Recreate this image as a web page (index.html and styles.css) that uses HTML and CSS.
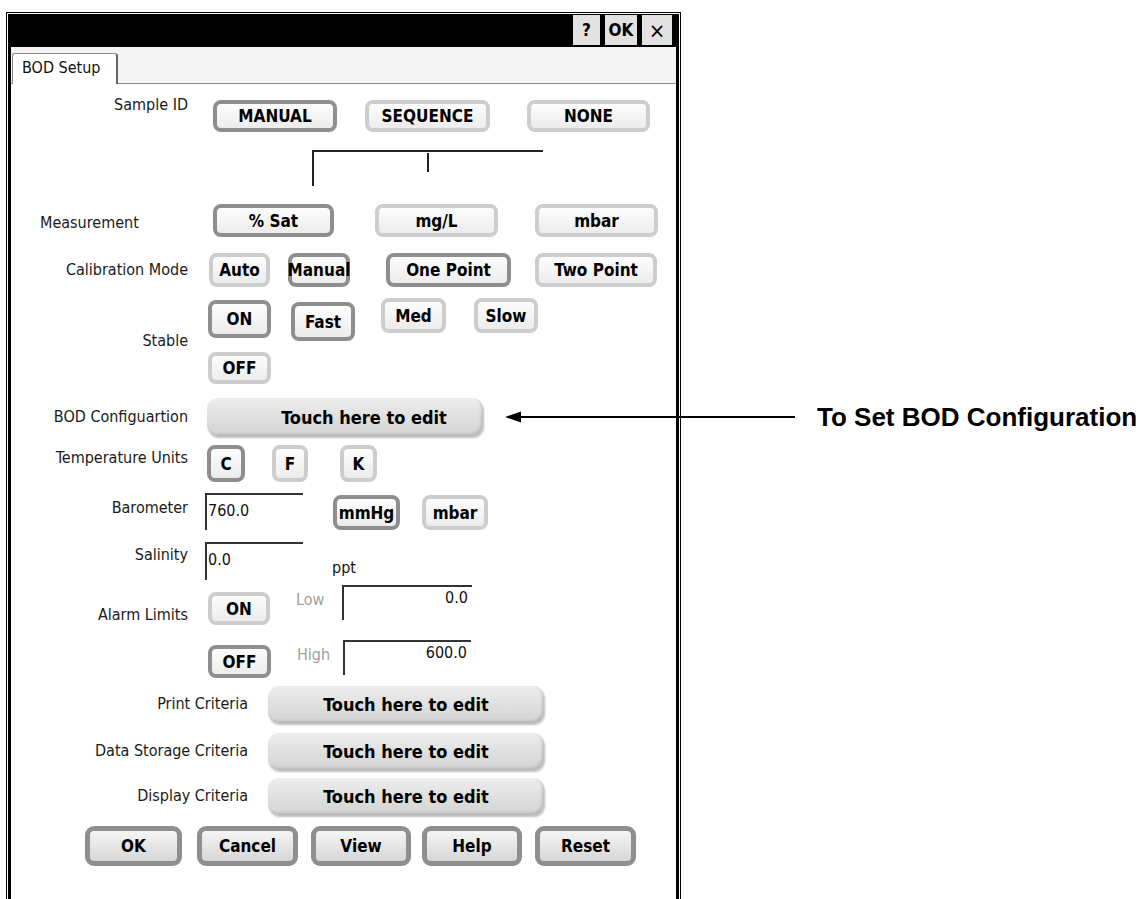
FILE: index.html
```html
<!DOCTYPE html>
<html lang="en">
<head>
    <meta charset="UTF-8">
    <title>BOD Setup</title>
    <link rel="stylesheet" href="styles.css">
</head>
<body>

    <div class="window">
        <div class="titlebar">
            <span class="tb-btn tb-help">?</span>
            <span class="tb-btn tb-ok">OK</span>
            <span class="tb-btn tb-close">&times;</span>
        </div>

        <div class="tabstrip">
            <div class="tab">BOD Setup</div>
        </div>

        <div class="panel">
            <div class="row r-sample">
                <div class="lbl">Sample ID</div>
                <div class="btn on b-manual">MANUAL</div>
                <div class="btn b-seq">SEQUENCE</div>
                <div class="btn b-none">NONE</div>
            </div>

            <div class="connector"><div class="stub"></div></div>

            <div class="row r-measure">
                <div class="lbl">Measurement</div>
                <div class="btn on b-sat">% Sat</div>
                <div class="btn b-mgl">mg/L</div>
                <div class="btn b-mbar">mbar</div>
            </div>

            <div class="row r-cal">
                <div class="lbl">Calibration Mode</div>
                <div class="btn b-auto">Auto</div>
                <div class="btn on b-manual2">Manual</div>
                <div class="btn on b-one">One Point</div>
                <div class="btn b-two">Two Point</div>
            </div>

            <div class="row r-speed">
                <div class="lbl"></div>
                <div class="btn on b-on">ON</div>
                <div class="btn on b-fast">Fast</div>
                <div class="btn b-med">Med</div>
                <div class="btn b-slow">Slow</div>
            </div>

            <div class="row r-stable">
                <div class="lbl">Stable</div>
                <div class="btn b-off">OFF</div>
            </div>

            <div class="row r-bod">
                <div class="lbl">BOD Configuartion</div>
                <div class="touch touch-bod">Touch here to edit</div>
                <div class="callout">
                    <svg width="290" height="14" viewBox="0 0 290 14">
                        <line x1="12" y1="7" x2="290" y2="7" stroke="#000" stroke-width="2"/>
                        <polygon points="0,7 16,1.5 16,12.5" fill="#000"/>
                    </svg>
                    <span class="callout-text">To Set BOD Configuration</span>
                </div>
            </div>

            <div class="row r-temp">
                <div class="lbl">Temperature Units</div>
                <div class="btn on b-c">C</div>
                <div class="btn b-f">F</div>
                <div class="btn b-k">K</div>
            </div>

            <div class="row r-baro">
                <div class="lbl">Barometer</div>
                <div class="field">760.0</div>
                <div class="btn on b-mmhg">mmHg</div>
                <div class="btn b-mbar2">mbar</div>
            </div>

            <div class="row r-sal">
                <div class="lbl">Salinity</div>
                <div class="field">0.0</div>
                <div class="unit">ppt</div>
            </div>

            <div class="row r-alarm1">
                <div class="lbl">Alarm Limits</div>
                <div class="btn b-alon">ON</div>
                <div class="lim-lbl">Low</div>
                <div class="field num">0.0</div>
            </div>

            <div class="row r-alarm2">
                <div class="lbl"></div>
                <div class="btn on b-aloff">OFF</div>
                <div class="lim-lbl">High</div>
                <div class="field num">600.0</div>
            </div>

            <div class="row r-crit">
                <div class="lbl">Print Criteria</div>
                <div class="touch">Touch here to edit</div>
            </div>

            <div class="row r-crit r-data">
                <div class="lbl">Data Storage Criteria</div>
                <div class="touch">Touch here to edit</div>
            </div>

            <div class="row r-crit r-disp">
                <div class="lbl">Display Criteria</div>
                <div class="touch">Touch here to edit</div>
            </div>

            <div class="row r-actions">
                <div class="big b-ok">OK</div>
                <div class="big b-cancel">Cancel</div>
                <div class="big b-view">View</div>
                <div class="big b-help">Help</div>
                <div class="big b-reset">Reset</div>
            </div>
        </div>
    </div>

</body>
</html>
```

FILE: styles.css
```css
* {
    box-sizing: border-box;
}
html, body {
    overflow: hidden;
}
body {
    margin: 0;
    padding: 12px 0 0 6px;
    background-color: #fff;
    font-family: "DejaVu Sans Condensed", "DejaVu Sans", sans-serif;
    font-size: 16px;
    color: #111;
}

/* window frame */
.window {
    margin: 2px 0 0 2px;
    width: 671px;
    height: 900px;
    border: 3px solid #000;
    outline: 1px solid #000;
    outline-offset: 1px;
    background-color: #fff;
}
.titlebar {
    height: 30px;
    background-color: #000;
    display: flex;
    justify-content: flex-end;
    gap: 5px;
    padding-right: 4px;
}
.tb-btn {
    height: 30px;
    margin-top: -2px;
    background-color: #e2e2e2;
    color: #000;
    font-weight: bold;
    font-size: 17px;
    display: flex;
    align-items: center;
    justify-content: center;
}
.tb-help { width: 27px; }
.tb-ok { width: 32px; }
.tb-close { width: 30px; font-weight: normal; font-size: 22px; }

.tabstrip {
    height: 37px;
    padding: 6px 0 0 1px;
    background-color: #f4f4f4;
    border-bottom: 1px solid #8a8a8a;
    display: flex;
}
.tab {
    width: 106px;
    height: 31px;
    padding: 5px 0 0 9px;
    background-color: #fff;
    border: 1px solid #8a8a8a;
    border-bottom: none;
    border-right: 2px solid #666;
    border-radius: 3px 3px 0 0;
    line-height: 18px;
}

/* form rows */
.row {
    display: flex;
    align-items: flex-start;
}
.lbl {
    width: 177px;
    flex-shrink: 0;
    text-align: right;
    line-height: 16px;
    color: #1a1a1a;
}
.btn {
    flex-shrink: 0;
    display: flex;
    align-items: center;
    justify-content: center;
    border: 4px solid #cdcdcd;
    border-radius: 8px;
    background: linear-gradient(#fdfdfd, #ececec);
    font-weight: bold;
    font-size: 17px;
    color: #000;
}
.btn.on {
    border-color: #8e8e8e;
}
.touch {
    flex-shrink: 0;
    width: 276px;
    height: 37px;
    margin-left: 20px;
    display: flex;
    align-items: center;
    justify-content: center;
    border-radius: 11px;
    background: linear-gradient(#ededed, #d3d3d3);
    box-shadow: inset -2px -2px 3px rgba(0, 0, 0, 0.15), 1px 2px 2px rgba(0, 0, 0, 0.25);
    font-weight: bold;
    font-size: 18px;
    color: #000;
}
.field {
    flex-shrink: 0;
    width: 98px;
    height: 37px;
    margin-left: 17px;
    padding: 8px 0 0 1px;
    border-top: 2px solid #333;
    border-left: 2px solid #333;
    line-height: 16px;
}
.field.num {
    width: 130px;
    height: 35px;
    margin-left: 0;
    padding: 3px 4px 0 0;
    text-align: right;
}
.lim-lbl {
    width: 46px;
    flex-shrink: 0;
    margin-top: 7px;
    padding-left: 26px;
    color: #a0a0a0;
    line-height: 16px;
    box-sizing: content-box;
}

.r-sample { margin-top: 13px; height: 36px; }
.r-sample .btn { height: 32px; margin-top: 3px; }
.b-manual { width: 124px; margin-left: 25px; }
.b-seq { width: 125px; margin-left: 28px; }
.b-none { width: 123px; margin-left: 37px; }

.connector {
    margin: 17px 0 0 301px;
    width: 231px;
    height: 36px;
    border-top: 2px solid #222;
    border-left: 2px solid #222;
}
.stub {
    width: 2px;
    height: 19px;
    margin: 1px 0 0 113px;
    background-color: #222;
}

.r-measure { margin-top: 18px; height: 33px; }
.r-measure .lbl { text-align: left; padding-left: 29px; margin-top: 11px; }
.r-measure .btn { height: 33px; }
.b-sat { width: 121px; margin-left: 25px; }
.b-mgl { width: 123px; margin-left: 41px; }
.b-mbar { width: 123px; margin-left: 37px; }

.r-cal { margin-top: 16px; height: 34px; }
.r-cal .lbl { margin-top: 9px; }
.r-cal .btn { height: 34px; }
.b-auto { width: 61px; margin-left: 21px; }
.b-manual2 { width: 62px; margin-left: 18px; }
.b-one { width: 125px; margin-left: 36px; }
.b-two { width: 122px; margin-left: 24px; }

.r-speed { margin-top: 11px; height: 35px; }
.b-on { width: 63px; height: 38px; margin: 2px 0 0 20px; }
.b-fast { width: 64px; height: 39px; margin: 4px 0 0 20px; }
.b-med { width: 65px; height: 35px; margin-left: 26px; }
.b-slow { width: 64px; height: 35px; margin-left: 28px; }

.r-stable { height: 51px; }
.b-off { width: 63px; height: 32px; margin: 19px 0 0 20px; }

.r-bod { margin-top: 14px; height: 38px; position: relative; }
.r-bod .lbl { margin-top: 11px; }
.touch-bod { height: 38px; margin-left: 19px; padding-left: 38px; }
.callout {
    position: absolute;
    left: 494px;
    top: 0;
    height: 38px;
    display: flex;
    align-items: center;
}
.callout svg {
    display: block;
}
.callout-text {
    margin-left: 22px;
    font-family: "Liberation Sans", Arial, sans-serif;
    font-weight: bold;
    font-size: 26px;
    color: #000;
    white-space: nowrap;
}

.r-temp { margin-top: 9px; height: 37px; }
.r-temp .lbl { margin-top: 5px; }
.r-temp .btn { height: 37px; }
.b-c { width: 38px; margin-left: 19px; }
.b-f { width: 36px; margin-left: 27px; }
.b-k { width: 37px; margin-left: 32px; }

.r-baro { margin-top: 11px; height: 37px; }
.r-baro .lbl { margin-top: 7px; }
.r-baro .btn { height: 35px; margin-top: 2px; }
.b-mmhg { width: 67px; margin-left: 30px; }
.b-mbar2 { width: 66px; margin-left: 22px; }

.r-sal { margin-top: 12px; height: 38px; }
.r-sal .lbl { margin-top: 5px; }
.r-sal .field { height: 38px; }
.unit { margin: 18px 0 0 29px; line-height: 16px; }

.r-alarm1 { margin-top: 5px; height: 40px; }
.r-alarm1 .lbl { margin-top: 22px; }
.b-alon { width: 62px; height: 33px; margin: 7px 0 0 20px; }

.r-alarm2 { margin-top: 15px; height: 38px; }
.b-aloff { width: 63px; height: 33px; margin: 5px 0 0 20px; }
.r-alarm2 .field.num { width: 128px; }

.r-crit { margin-top: 8px; height: 37px; }
.r-crit .lbl { width: 237px; margin-top: 10px; }
.r-data { margin-top: 10px; }

.r-actions { margin-top: 11px; height: 40px; }
.big {
    flex-shrink: 0;
    height: 40px;
    display: flex;
    align-items: center;
    justify-content: center;
    border: 5px solid #8f8f8f;
    border-radius: 9px;
    background: linear-gradient(#f5f5f5, #d6d6d6);
    font-weight: bold;
    font-size: 17px;
    color: #000;
}
.b-ok { width: 97px; margin-left: 74px; }
.b-cancel { width: 101px; margin-left: 15px; }
.b-view { width: 100px; margin-left: 13px; }
.b-help { width: 100px; margin-left: 11px; }
.b-reset { width: 101px; margin-left: 13px; }
```
